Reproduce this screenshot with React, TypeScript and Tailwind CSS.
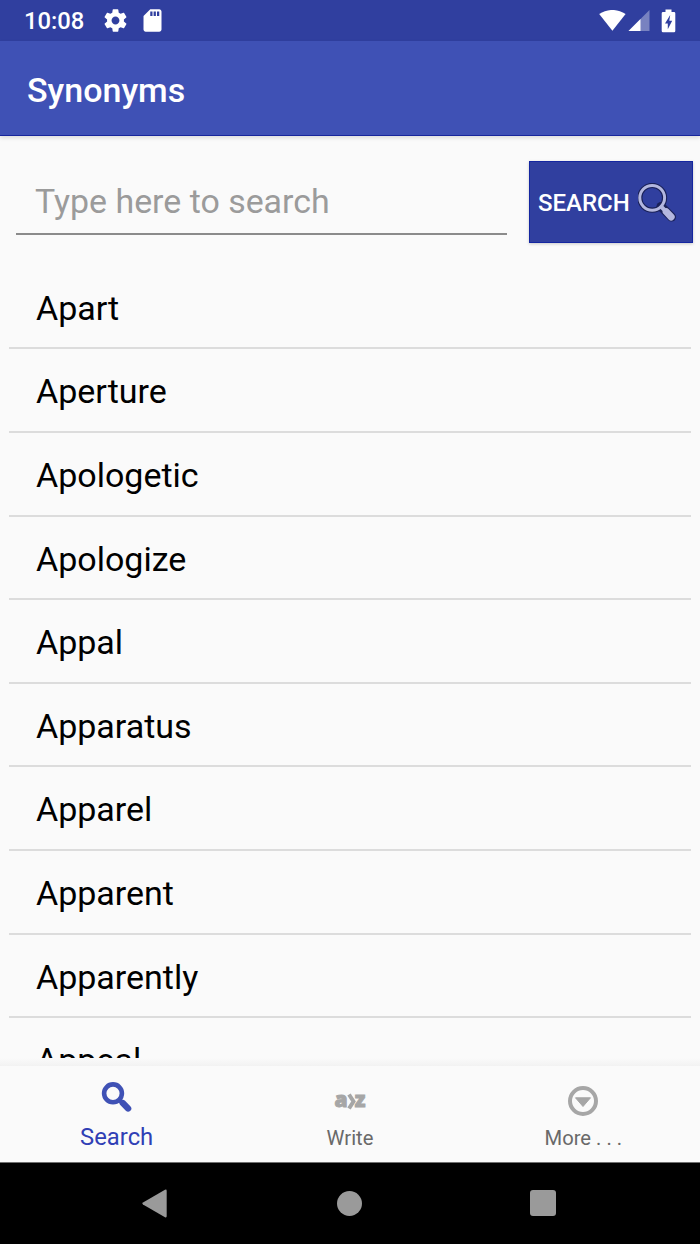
const words = [
  "Apart",
  "Aperture",
  "Apologetic",
  "Apologize",
  "Appal",
  "Apparatus",
  "Apparel",
  "Apparent",
  "Apparently",
  "Appeal",
];

function StatusBar() {
  return (
    <div className="flex h-[41px] shrink-0 items-center bg-[#303f9f] pl-6 pr-6 text-white">
      <span className="w-[60px] whitespace-nowrap pt-[2px] text-[23.8px] font-medium leading-none">10:08</span>
      <svg className="ml-[18px] h-[27px] w-[27px]" viewBox="0 0 24 24" fill="currentColor">
        <path d="M19.43 12.98c.04-.32.07-.64.07-.98s-.03-.66-.07-.98l2.11-1.65c.19-.15.24-.42.12-.64l-2-3.46c-.12-.22-.39-.3-.61-.22l-2.49 1c-.52-.4-1.08-.73-1.69-.98l-.38-2.65C14.46 2.18 14.25 2 14 2h-4c-.25 0-.46.18-.49.42l-.38 2.65c-.61.25-1.17.59-1.69.98l-2.49-1c-.23-.09-.49 0-.61.22l-2 3.46c-.13.22-.07.49.12.64l2.11 1.65c-.04.32-.07.65-.07.98s.03.66.07.98l-2.11 1.65c-.19.15-.24.42-.12.64l2 3.46c.12.22.39.3.61.22l2.49-1c.52.4 1.08.73 1.69.98l.38 2.65c.03.24.24.42.49.42h4c.25 0 .46-.18.49-.42l.38-2.65c.61-.25 1.17-.59 1.69-.98l2.49 1c.23.09.49 0 .61-.22l2-3.46c.12-.22.07-.49-.12-.64l-2.11-1.65zM12 15.5c-1.93 0-3.5-1.57-3.5-3.5s1.57-3.5 3.5-3.5 3.5 1.57 3.5 3.5-1.57 3.5-3.5 3.5z" />
      </svg>
      <svg className="ml-[10px] h-[27px] w-[27px]" viewBox="0 0 24 24" fill="currentColor">
        <path d="M18 2h-8L4.02 8 4 20c0 1.1.9 2 2 2h12c1.1 0 2-.9 2-2V4c0-1.1-.9-2-2-2zm-6 6h-2V4h2v4zm3 0h-2V4h2v4zm3 0h-2V4h2v4z" />
      </svg>
      <div className="ml-auto flex items-center">
        <svg className="h-[22px] w-[28px]" viewBox="0 0 28 22" fill="currentColor">
          <path d="M.2 4C8.4 -1.4 18.4 -1.4 26.6 4L13.4 20.8Z" />
        </svg>
        <svg className="ml-px h-[22px] w-[22px]" viewBox="0 0 22 22" fill="currentColor">
          <path d="M21.5 0V21H.5Z" opacity=".35" />
          <path d="M12.5 9V21H.5Z" />
        </svg>
        <svg className="ml-[11px] h-[24px] w-[15px]" viewBox="0 0 15 24">
          <path d="M4.5 0.5H10.5V3H13Q14.3 3 14.3 4.3V22Q14.3 23.3 13 23.3H2Q.7 23.3 .7 22V4.3Q.7 3 2 3H4.5Z" fill="currentColor" />
          <path d="M9.2 6L4 14.4H6.8V20.3L11.2 11.8H8.3Z" fill="#303f9f" />
        </svg>
      </div>
    </div>
  );
}

function SearchBar() {
  return (
    <div className="flex h-[129.8px] shrink-0 items-start pl-4 pr-[7px] pt-[25px]">
      <div className="mt-[3px] flex h-[71px] w-[491px] items-center border-b-2 border-[#8b8b8b] pl-[19px] pt-[7px]">
        <span className="whitespace-nowrap text-[33.9px] leading-none text-[#9b9b9b]">Type here to search</span>
      </div>
      <button className="ml-[22px] flex h-[82px] w-[164px] items-center border border-[#1426a0] bg-[#303f9f] pl-2 text-white shadow-[0_1px_3px_rgba(0,0,0,0.2)]">
        <span className="w-[92px] whitespace-nowrap pt-[2px] text-left text-[24px] font-medium leading-none">SEARCH</span>
        <svg className="ml-2 mt-px h-[40px] w-[40px]" viewBox="0 0 40 40" fill="none">
          <circle cx="14.2" cy="14.8" r="12.4" stroke="#1a2158" strokeWidth="5.2" />
          <path d="M23 23.5L27.5 28L33.5 34" stroke="#1a2158" strokeWidth="9" strokeLinecap="round" />
          <circle cx="14.2" cy="14.8" r="12.4" stroke="#b3b7df" strokeWidth="3" />
          <path d="M23 23.5L28 28.5" stroke="#b3b7df" strokeWidth="4" />
          <path d="M28.2 28.7L33.2 34" stroke="#b3b7df" strokeWidth="7" strokeLinecap="round" />
        </svg>
      </button>
    </div>
  );
}

function BottomNav() {
  return (
    <nav className="grid h-24 shrink-0 grid-cols-3 bg-[#fafafa] text-center text-[#696969]">
      <div className="flex flex-col items-center pt-[15px] text-[#3f51b5]">
        <svg className="h-[32px] w-[32px]" viewBox="0 0 32 32" fill="none" stroke="currentColor">
          <circle cx="12" cy="12.3" r="8.9" strokeWidth="4.6" />
          <path d="M18 18.5L21.5 22" strokeWidth="4.5" />
          <path d="M21.8 22.1L27.1 27.4" strokeWidth="6.4" strokeLinecap="round" />
        </svg>
        <span className="mt-[13px] text-[23.8px] leading-none text-[#303fb5]">Search</span>
      </div>
      <div className="flex flex-col items-center pt-[18px]">
        <div className="flex h-[32px] items-center text-[#a6a6a6]">
          <span className="font-['Open_Sans'] text-[21px] font-extrabold leading-none [-webkit-text-stroke:1px_#a6a6a6]">a</span>
          <svg className="mt-[3px] -ml-px h-[17px] w-[9px]" viewBox="0 0 9 17" fill="none" stroke="currentColor" strokeWidth="4">
            <path d="M2 1.5L6.5 8.5L2 15.5" />
          </svg>
          <span className="-ml-px font-['Open_Sans'] text-[21px] font-extrabold leading-none [-webkit-text-stroke:1px_#a6a6a6]">z</span>
        </div>
        <span className="mt-[12px] text-[20.2px] leading-none">Write</span>
      </div>
      <div className="flex flex-col items-center pt-[19px]">
        <svg className="h-[32px] w-[32px]" viewBox="0 0 32 32">
          <circle cx="16" cy="16" r="13" fill="none" stroke="#a6a6a6" strokeWidth="4" />
          <path d="M8.5 12.8H23.5L16 21.5Z" fill="#a6a6a6" stroke="#a6a6a6" strokeLinejoin="round" />
        </svg>
        <span className="mt-[11px] text-[20.2px] leading-none">More . . .</span>
      </div>
    </nav>
  );
}

function SystemNav() {
  return (
    <div className="flex h-[82px] shrink-0 items-center border-t border-[#707070] bg-black pl-[141px] text-[#9a9a9a]">
      <svg className="h-[29px] w-[26px]" viewBox="0 0 26 29" fill="currentColor">
        <path d="M24 .8Q25.7 0 25.7 2V27Q25.7 29 24 28.2L2 15.5Q.5 14.5 2 13.5Z" />
      </svg>
      <div className="ml-[170px] h-[25px] w-[25px] rounded-full bg-[#9a9a9a]" />
      <div className="ml-[168px] h-[26px] w-[26px] rounded-[3px] bg-[#9a9a9a]" />
    </div>
  );
}

export default function App() {
  return (
    <div className="flex h-[1244px] w-[700px] flex-col overflow-hidden bg-[#fafafa] font-['Roboto',sans-serif]">
      <StatusBar />
      <header className="flex h-[95px] shrink-0 items-center border-b border-[#17269c] bg-[#3f51b5] pl-[27px] pt-1 text-white shadow-[0_2px_4px_rgba(0,0,0,0.12)]">
        <h1 className="text-[34px] font-medium leading-none">Synonyms</h1>
      </header>
      <SearchBar />
      <ul className="h-[792.2px] shrink-0 overflow-hidden px-[9px]">
        {words.map((word) => (
          <li key={word} className="flex h-[83.6px] items-center border-b-2 border-[#dcdcdc] pl-[27px] pt-[2.4px] text-[34px] leading-none text-black">
            {word}
          </li>
        ))}
      </ul>
      <div className="h-2 shrink-0 bg-linear-to-b from-[#fafafa] to-[#f2f2f2]" />
      <BottomNav />
      <SystemNav />
    </div>
  );
}
